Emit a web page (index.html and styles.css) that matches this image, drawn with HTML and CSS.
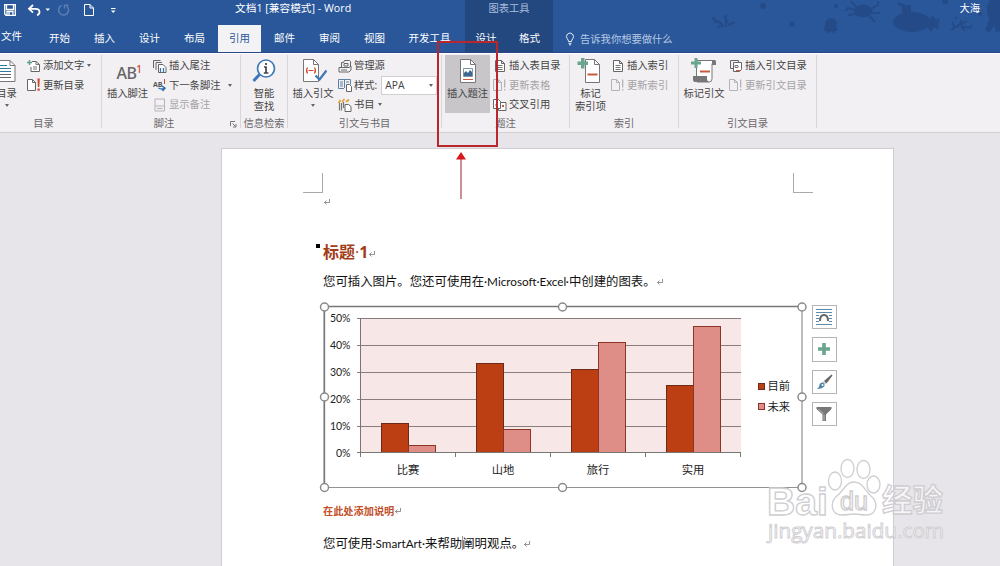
FILE: index.html
```
<!DOCTYPE html>
<html lang="zh-CN">
<head>
  <meta charset="UTF-8">
  <title>文档1 [兼容模式] - Word</title>
  <link rel="stylesheet" href="styles.css">
</head>
<body>

<!-- shared icon shapes -->
<svg class="defs" width="0" height="0">
  <symbol id="i-update" viewBox="0 0 14 14">
    <path d="M.5 1.500h5l3 3v8h-8z" fill="#fff" stroke="#666"/><path d="M5.500 1.500v3h3" fill="none" stroke="#666"/>
    <path d="M10.400 .5h2.400l-.5 8.500h-1.400zM10.500 10.500h2.200v2.200h-2.200z" fill="#d24726"/>
  </symbol>
  <symbol id="i-update-off" viewBox="0 0 14 14">
    <path d="M.5 1.500h5l3 3v8h-8zM5.500 1.500v3h3" fill="none" stroke="#b5b3b6"/>
    <path d="M11 1.500h1.300v8H11zM11 11h1.300v1.500H11z" fill="#b5b3b6"/>
  </symbol>
  <symbol id="i-lines" viewBox="0 0 14 14">
    <path d="M2.500 1.500h6l3 3v8h-9zM8.500 1.500v3h3" fill="#fff" stroke="#666"/>
    <path d="M4.500 6.500h5M4.500 8.500h5M4.500 10.500h5" stroke="#777"/>
  </symbol>
  <symbol id="i-return" viewBox="0 0 8 8">
    <path d="M6.500 1v3.500h-5M3.500 2.500l-2 2 2 2" fill="none" stroke="#777" stroke-width=".8"/>
  </symbol>
  <symbol id="i-plus" viewBox="0 0 10 10">
    <path d="M3.500 0h3v3.500H10v3H6.500V10h-3V6.500H0v-3h3.500z" fill="#6aa58f"/>
  </symbol>
</svg>

<header class="header">
  <div class="header-left">
    <div class="title-row">
      <div class="quick">
        <svg width="120" height="20" viewBox="0 0 120 20">
          <path d="M4.700 4.700h10.600v10.600H6L4.700 14zM6.500 5v4.500h7V5M7 15v-3.500h6V15M9 12v3" fill="none" stroke="#fff" stroke-width="1.300"/>
          <path d="M33 5l-4 3.800 4 3.800M29.500 8.800h6q4 0 4 3.200 0 2.500-2.500 3" fill="none" stroke="#fff" stroke-width="1.800"/>
          <path d="M45.500 8.500h4.500l-2.200 2.500z" fill="#fff"/>
          <path d="M61.500 5.500a5 5 0 1 0 5 .5M64.500 8.500V5.200h4" fill="none" stroke="#5a7db3" stroke-width="1.500"/>
          <path d="M84.500 4.500h5.500l3.500 3.500v7.500h-9zM90 4.500v3.500h3.500" fill="none" stroke="#fff"/>
          <path d="M111 8.500h4.500" stroke="#fff"/><path d="M111 10.500h4.500L113.200 13z" fill="#fff"/>
        </svg>
      </div>
      <div class="title">文档1 [兼容模式] - Word</div>
    </div>
    <nav class="tabs">
      <div class="tab file">文件</div>
      <div class="tab">开始</div>
      <div class="tab">插入</div>
      <div class="tab">设计</div>
      <div class="tab">布局</div>
      <div class="tab active">引用</div>
      <div class="tab">邮件</div>
      <div class="tab">审阅</div>
      <div class="tab">视图</div>
      <div class="tab wide">开发工具</div>
    </nav>
  </div>
  <div class="header-context">
    <div class="context-title">图表工具</div>
    <nav class="tabs">
      <div class="tab first">设计</div>
      <div class="tab">格式</div>
    </nav>
  </div>
  <div class="header-right">
    <svg class="sea" width="330" height="52" viewBox="0 0 330 52">
      <g fill="#244b87">
        <circle cx="93" cy="6" r="3"/><circle cx="122" cy="24" r="2.500"/><circle cx="166" cy="6" r="2"/><circle cx="275" cy="1" r="3"/><circle cx="310" cy="14" r="2"/>
        <circle cx="161" cy="24" r="6"/><path d="M155 26l-1 5h3l1 3 3-3 3 3 1-3h3l-2-5z"/>
        <ellipse cx="193" cy="11" rx="9" ry="6.500"/>
        <ellipse cx="242" cy="22" rx="19" ry="10"/><path d="M232 14V7l-5-3 1-2 8 3h5v9zM258 20l5-5 3 5 4-2-2 6 1 6-5-3-3 5-5-7z"/>
        <ellipse cx="328" cy="10" rx="11" ry="14"/><path d="M319 20l-4 10 4 3 5-7 2 6 5-1V16z"/>
      </g>
      <g fill="none" stroke="#244b87" stroke-width="2">
        <path d="M46 23l-3-6M43 19l8 4 3 4M56 27v-9M54 18l3-3M58 25l7-3M52 25l-5 3M58 22l-3-3"/>
        <path d="M187 11l-9-3-3 3M187 14l-9 1M201 9l7-4V1M201 13l9 0M199 16l6 6M186 7l-5-6"/>
        <path d="M281 30l8-5 3-5M285 28l-3-6M290 25l7-4M291 26l9 2 2-3M291 26l4 5M287 19l-2-2"/>
      </g>
    </svg>
    <div class="user">大海</div>
    <div class="tell">
      <svg width="10" height="14" viewBox="0 0 10 14"><path d="M3.500 9.500q0-1.500-1.200-2.700a3.500 3.500 0 1 1 5.400 0Q6.500 8 6.500 9.500zM3.500 11.300h3M4 12.800h2" fill="none" stroke="#e6edf7"/></svg>
      <span>告诉我你想要做什么</span>
    </div>
  </div>
</header>

<section class="ribbon">
  <div class="group g-toc">
    <div class="group-body">
      <div class="big">
        <svg width="28" height="28" viewBox="0 0 28 28"><path d="M1.500 3.500H17l5 5v16H1.500z" fill="#fff" stroke="#777"/><path d="M17 3.500v5h5" fill="none" stroke="#777"/><path d="M4 8.500h10M4 11.500h14M4 14.500h14" stroke="#2e7b9c"/><path d="M4 17.500h14M4 20.500h14" stroke="#666"/></svg>
        <span>目录</span><i class="arrow"></i>
      </div>
      <div class="col">
        <div class="row"><svg width="14" height="14" viewBox="0 0 14 14"><path d="M5 2.500h4l3.500 3v7H4V8" fill="#fff" stroke="#666"/><path d="M9 2.500v3h3.500M6 8h4M6 10h4" fill="none" stroke="#777"/><path d="M0 3.500h5M2.500 1v5" stroke="#5a9e84" stroke-width="1.300"/></svg><span>添加文字</span><i class="arrow"></i></div>
        <div class="row"><svg width="14" height="14"><use href="#i-update"/></svg><span>更新目录</span></div>
      </div>
    </div>
    <div class="group-name">目录</div>
  </div>

  <div class="group g-note">
    <div class="group-body">
      <div class="big">
        <div class="ab">AB<sup>1</sup></div>
        <span>插入脚注</span>
      </div>
      <div class="col">
        <div class="row"><svg width="14" height="14" viewBox="0 0 14 14"><path d="M.5 9V1.500h7M3 11V3.500h6" fill="none" stroke="#666"/><path d="M5.500 5.500h4.500l3 3v5h-7.500z" fill="#fff" stroke="#666"/><path d="M7.500 13V9M10.500 13V9" stroke="#3b78b5" stroke-width="1.300"/></svg><span>插入尾注</span></div>
        <div class="row"><svg width="14" height="14" viewBox="0 0 14 14"><text x="0" y="8.500" class="ab-mini">AB</text><path d="M11.500 1v5" stroke="#d24726"/><path d="M5.500 10q3 2 6 0M9 8l3 2.200L9.500 13" fill="none" stroke="#2f6fae" stroke-width="1.500"/></svg><span>下一条脚注</span><i class="arrow far"></i></div>
        <div class="row off"><svg width="14" height="14" viewBox="0 0 14 14"><path d="M2 1h9.500v12H2zM2 8h9.500M4 10.500h5.500" fill="none" stroke="#b5b3b6"/></svg><span>显示备注</span></div>
      </div>
    </div>
    <div class="group-name">脚注</div>
    <svg class="launcher" width="7" height="7" viewBox="0 0 7 7"><path d="M.5 5V.5H5M2.500 2.500l3 3M6 3v3H3" fill="none" stroke="#777"/></svg>
  </div>

  <div class="group g-find">
    <div class="group-body">
      <div class="big">
        <svg width="28" height="28" viewBox="0 0 28 28"><path d="M9.500 17.500L3.500 24" stroke="#3f78b5" stroke-width="3"/><circle cx="16" cy="11.500" r="8.500" fill="#fff" stroke="#3f78b5" stroke-width="1.700"/><path d="M16 6v2M14 10h2v6M13.800 16h4.600" stroke="#444" stroke-width="1.700" fill="none"/></svg>
        <span>智能<br>查找</span>
      </div>
    </div>
    <div class="group-name">信息检索</div>
  </div>

  <div class="group g-cite">
    <div class="group-body">
      <div class="big">
        <svg width="28" height="28" viewBox="0 0 28 28"><path d="M4.500 2.500h10l5 5v17h-15z" fill="#fff" stroke="#777"/><path d="M14.500 2.500v5h5" fill="none" stroke="#777"/><path d="M8.500 10.500q-2 3 0 6M15.500 10.500q2 3 0 6M9.500 13.500h5" fill="none" stroke="#d2472a" stroke-width="1.200"/><path d="M16.500 18.500l4 4 7-9" fill="none" stroke="#3f78b5" stroke-width="2.200"/></svg>
        <span>插入引文</span><i class="arrow"></i>
      </div>
      <div class="col">
        <div class="row"><svg width="14" height="14" viewBox="0 0 14 14"><path d="M3.500 8V3.500h2l1-2h5l1 1v5.500M1 8.500h10l2-1.500v4l-2 2H1z" fill="#f4f2f5" stroke="#666"/><path d="M3 11h6M6 4.500h4v2.500H6z" fill="none" stroke="#666"/></svg><span>管理源</span></div>
        <div class="row"><svg width="14" height="14" viewBox="0 0 14 14"><path d="M.5 1.500h12v5M.5 1.500v9H6M6.500 2v8M2 4h3M2 6h3M2 8h3M8 4h3" fill="none" stroke="#5b82a5"/><path d="M8.500 6.500h3l2 2v5h-5z" fill="#fff" stroke="#666"/></svg><span>样式:</span><div class="combo">APA<i class="arrow"></i></div></div>
        <div class="row"><svg width="14" height="14" viewBox="0 0 14 14"><path d="M1.500 4v8.500M3.500 5v7.500M5.500 4v6" stroke="#777" stroke-width="1.200"/><path d="M.5 5l2-3M4 4l2.500-3M8 4l3-2.500" stroke="#e4a23c" stroke-width="1.800"/><path d="M7 6.500h3.500l2.500 2v5H7z" fill="#fff" stroke="#666"/></svg><span>书目</span><i class="arrow"></i></div>
      </div>
    </div>
    <div class="group-name">引文与书目</div>
  </div>

  <div class="group g-caption">
    <div class="group-body">
      <div class="big selected">
        <svg width="28" height="28" viewBox="0 0 28 28"><path d="M6.500 2.500h10l5 5v18h-15z" fill="#fff" stroke="#777"/><path d="M16.500 2.500v5h5" fill="none" stroke="#777"/><path d="M9.500 11.500h9v8h-9z" fill="#fff" stroke="#7d96ac"/><path d="M10 19v-3l2-2 2 2 2-3 2 2v4z" fill="#3d678f"/><path d="M9 22.500h10" stroke="#c9593f"/></svg>
        <span>插入题注</span>
      </div>
      <div class="col">
        <div class="row"><svg width="14" height="14"><use href="#i-lines"/></svg><span>插入表目录</span></div>
        <div class="row off"><svg width="14" height="14"><use href="#i-update-off"/></svg><span>更新表格</span></div>
        <div class="row"><svg width="14" height="14" viewBox="0 0 14 14"><path d="M.5 1.500h5l2 2v7h-7zM7.500 4.500H13v8H5.500v-2" fill="#fff" stroke="#666"/><path d="M2.500 6h2v2h-2zM9 7h2v2H9z" fill="#c9593f"/></svg><span>交叉引用</span></div>
      </div>
    </div>
    <div class="group-name">题注</div>
  </div>

  <div class="group g-index">
    <div class="group-body">
      <div class="big">
        <svg width="28" height="28" viewBox="0 0 28 28"><path d="M8.500 2.500h9l5 5v18h-14z" fill="#fff" stroke="#777"/><path d="M17.500 2.500v5h5" fill="none" stroke="#777"/><path d="M4 1h3.500v3.500H11V8H7.500v3.500H4V8H.5V4.500H4z" fill="#6aa58f"/><path d="M13 17.500h10" transform="translate(-2.500)" stroke="#c9593f" stroke-width="2"/></svg>
        <span>标记<br>索引项</span>
      </div>
      <div class="col">
        <div class="row"><svg width="14" height="14"><use href="#i-lines"/></svg><span>插入索引</span></div>
        <div class="row off"><svg width="14" height="14"><use href="#i-update-off"/></svg><span>更新索引</span></div>
      </div>
    </div>
    <div class="group-name">索引</div>
  </div>

  <div class="group g-auth">
    <div class="group-body">
      <div class="big">
        <svg width="28" height="28" viewBox="0 0 28 28"><path d="M6.500 19V3.500H25v3h-3V22q0 3-3 3H7" fill="#fff" stroke="#777"/><path d="M22 3h2q2 0 2 2v3h-4zM3 19h14v3q0 2 2 3H5q-2 0-2-2z" fill="#777"/><path d="M4.500 1h3v3.500H11v3H7.500V11h-3V7.500H1v-3h3.500z" fill="#6aa58f"/><path d="M10 14.500h10" stroke="#c9593f" stroke-width="2"/></svg>
        <span>标记引文</span>
      </div>
      <div class="col">
        <div class="row"><svg width="14" height="14" viewBox="0 0 14 14"><path d="M4 9.500H1.500v-8h8V3" fill="none" stroke="#666"/><path d="M4.500 3.500h8v7l-2 2h-6z" fill="#fff" stroke="#666"/><path d="M6 6.500h3v2H6z" fill="none" stroke="#777"/><path d="M7 11.500h4" stroke="#c9593f"/></svg><span>插入引文目录</span></div>
        <div class="row off"><svg width="14" height="14"><use href="#i-update-off"/></svg><span>更新引文目录</span></div>
      </div>
    </div>
    <div class="group-name">引文目录</div>
  </div>
</section>

<main class="workspace">
  <article class="page">
    <div class="corners"><i class="corner left"></i><i class="corner right"></i></div>
    <p class="empty"><svg class="ret" width="8" height="8"><use href="#i-return"/></svg></p>
    <h1 class="heading"><i class="bullet"></i>标题<b class="dot">·</b>1<svg class="ret" width="8" height="8"><use href="#i-return"/></svg></h1>
    <p class="text">您可插入图片。您还可使用在<span class="en">·Microsoft·Excel·</span>中创建的图表。<svg class="ret" width="8" height="8"><use href="#i-return"/></svg></p>

    <div class="figure">
      <!-- origin of the viewBox is kept in page pixels -->
      <svg class="chart" width="490" height="194" viewBox="318 300 490 194">
        <rect x="361" y="318" width="380" height="135" fill="#f8e7e7"/>
        <path d="M357 318.500h384M357 345.500h384M357 372.500h384M357 399.500h384M357 426.500h384" stroke="#8b7d7d"/>
        <g stroke="#6d2a1a" stroke-width="1">
          <g fill="#bc3f14">
            <rect x="381.500" y="423.500" width="27" height="29"/>
            <rect x="476.500" y="363.500" width="27" height="89"/>
            <rect x="571.500" y="369.500" width="27" height="83"/>
            <rect x="666.500" y="385.500" width="27" height="67"/>
            <rect x="758.500" y="383.500" width="6" height="6"/>
          </g>
          <g fill="#df8e87" stroke="#8c3527">
            <rect x="408.500" y="445.500" width="27" height="7"/>
            <rect x="503.500" y="429.500" width="27" height="23"/>
            <rect x="598.500" y="342.500" width="27" height="110"/>
            <rect x="693.500" y="326.500" width="27" height="126"/>
            <rect x="758.500" y="403.500" width="6" height="6"/>
          </g>
        </g>
        <path d="M357 452.500h384M360.500 318v139M455.500 453v4M550.500 453v4M645.500 453v4M740.500 453v4" fill="none" stroke="#777"/>
        <g class="axis">
          <text x="350.500" y="322">50%</text><text x="350.500" y="349">40%</text><text x="350.500" y="376">30%</text>
          <text x="350.500" y="403">20%</text><text x="350.500" y="430">10%</text><text x="350.500" y="457">0%</text>
        </g>
        <g class="cats">
          <text x="408" y="474">比赛</text><text x="503" y="474">山地</text><text x="598" y="474">旅行</text><text x="693" y="474">实用</text>
        </g>
        <g class="legend"><text x="767.500" y="390">目前</text><text x="767.500" y="411">未来</text></g>
        <path d="M324 306.500h478" stroke="#777" stroke-width="1.700"/><path d="M324.300 306v182" stroke="#777" stroke-width="1.700"/>
        <path d="M802 306v182M324 487.500h478" stroke="#929292" stroke-width="1.200"/>
        <g fill="#fff" stroke="#8a8a8a" stroke-width="1.500">
          <circle cx="324.500" cy="307" r="4"/><circle cx="562.500" cy="307" r="4"/><circle cx="802" cy="307" r="4"/>
          <circle cx="324.500" cy="397" r="4"/><circle cx="802" cy="397" r="4"/>
          <circle cx="324.500" cy="487.500" r="4"/><circle cx="562.500" cy="487.500" r="4"/><circle cx="802" cy="487.500" r="4"/>
        </g>
      </svg>
      <div class="tools">
        <div class="tool"><svg width="18" height="18" viewBox="0 0 18 18"><path d="M1 1.500h16M1 4.500h16M1 16.500h16" stroke="#5d8bab"/><path d="M1 7.500h3M1 10.500h3M1 13.500h3M14 7.500h3M14 10.500h3M14 13.500h3" stroke="#5d8bab"/><path d="M5 13q0-6 4-6t4 6" fill="none" stroke="#666" stroke-width="2"/></svg></div>
        <div class="tool"><svg width="12" height="12"><use href="#i-plus"/></svg></div>
        <div class="tool"><svg width="18" height="18" viewBox="0 0 18 18"><path d="M16.500 1.500l1 1-6 8-2.500-2.500z" fill="#666"/><path d="M8 8.500l2.500 2.500" stroke="#999"/><path d="M7.500 9.500q2.500 1 2 3.500-2 3-8 3 3-1.500 3-4.500 1-2 3-2z" fill="#4882aa"/><circle cx="7.500" cy="12" r="1" fill="#fff"/></svg></div>
        <div class="tool"><svg width="18" height="18" viewBox="0 0 18 18"><path d="M1.500 2h15v2L11 9.500V16H7.500V9.500L1.500 4z" fill="#777"/><path d="M9 10v5.500M3.500 4l5 5" stroke="#bbb"/></svg></div>
      </div>
    </div>

    <p class="caption">在此处添加说明<svg class="ret" width="8" height="8"><use href="#i-return"/></svg></p>
    <p class="text last">您可使用<span class="en">·SmartArt·</span>来帮助<span class="caret"></span>阐明观点。<svg class="ret" width="8" height="8"><use href="#i-return"/></svg></p>
  </article>
</main>

<!-- red callout over the caption button -->
<div class="callout"></div>
<svg class="callout-arrow" width="12" height="50" viewBox="0 0 12 50"><path d="M6 6v42" stroke="#a8484c" stroke-width="1.200"/><path d="M6 1l5 7.500H1z" fill="#d8161c"/></svg>

<svg class="watermark" width="190" height="92" viewBox="760 456 190 92">
  <g class="wm">
    <text class="wm-logo" x="767" y="514.500" textLength="61" lengthAdjust="spacingAndGlyphs">Bai</text>
    <ellipse cx="835" cy="481" rx="6.500" ry="9"/><ellipse cx="847.500" cy="468.500" rx="6.500" ry="9"/><ellipse cx="863.500" cy="469.500" rx="6.500" ry="9"/><ellipse cx="873.500" cy="484.500" rx="6.500" ry="8.500"/>
    <path d="M854 482c-8 0-10 8-16 13-9 7-7 20 4 20 5 0 7-1 12-1s7 1 12 1c11 0 13-12 5-19-6-6-9-14-17-14z"/>
    <text class="wm-du" x="840" y="510" textLength="28" lengthAdjust="spacingAndGlyphs">du</text>
    <text class="wm-cn" x="882" y="511" textLength="61" lengthAdjust="spacingAndGlyphs">经验</text>
    <text class="wm-url" x="768" y="538" textLength="176" lengthAdjust="spacingAndGlyphs">jingyan.baidu.com</text>
  </g>
</svg>

</body>
</html>
```
FILE: styles.css
```
*{
  box-sizing: border-box;
}
body{
  margin: 0;
  width: 1000px;
  height: 566px;
  overflow: hidden;
  position: relative;
  background-color: #e7e5e9;
  font-family: "Open Sans", "Noto Sans CJK SC", sans-serif;
  font-size: 10.3px;
  color: #444;
}
svg{
  flex: none;
}
.defs{
  position: absolute;
}
.arrow{
  flex: none;
  width: 0;
  height: 0;
  border: 2.5px solid transparent;
  border-top: 3px solid #666;
  border-bottom: none;
}

/* title bar and tabs */
.header{
  display: flex;
  height: 53px;
  background-color: #2a579a;
  border-bottom: 1px solid #29488a;
  color: #fff;
}
.header-left{
  width: 465px;
}
.title-row{
  display: flex;
  height: 25px;
}
.quick{
  width: 235px;
  height: 20px;
}
.title{
  line-height: 17px;
  font-size: 10.7px;
  white-space: nowrap;
}
.tabs{
  display: flex;
  height: 27px;
}
.tab{
  width: 45px;
  line-height: 26px;
  text-align: center;
  font-size: 10.5px;
}
.tab.file{
  width: 37px;
  padding-left: 1px;
  line-height: 23px;
  text-align: left;
}
.tab.active{
  width: 43px;
  margin: 0 1px;
  background-color: #f3f2f5;
  color: #2b579a;
}
.tab.wide{
  width: 65px;
}
.tab.first{
  width: 42px;
}
.header-context{
  width: 88px;
  background-color: #23477f;
}
.context-title{
  height: 25px;
  line-height: 17px;
  text-align: center;
  color: #a9bedd;
}
.header-right{
  flex: 1;
  position: relative;
}
.sea{
  position: absolute;
  right: 0;
  top: 0;
}
.user{
  position: relative;
  height: 25px;
  padding-right: 20px;
  line-height: 17px;
  text-align: right;
}
.tell{
  display: flex;
  align-items: center;
  gap: 5px;
  height: 27px;
  padding-left: 12px;
  color: #b8cae5;
}

/* ribbon */
.ribbon{
  display: flex;
  height: 80px;
  background-color: #f2f0f3;
  border-top: 1px solid #fff;
  border-bottom: 1px solid #d2d0d3;
  overflow: hidden;
}
.group{
  position: relative;
  flex: none;
  height: 73px;
  margin-top: 1px;
  padding-top: 1px;
  border-right: 1px solid #d8d6d9;
}
.group-body{
  display: flex;
  height: 59px;
}
.group-name{
  line-height: 16px;
  height: 16px;
  text-align: center;
  color: #6a686b;
  white-space: nowrap;
}
.big{
  display: flex;
  flex-direction: column;
  align-items: center;
  flex: none;
  height: 58px;
  padding-top: 1px;
  line-height: 13px;
  text-align: center;
  white-space: nowrap;
}
.big span{
  margin-top: 2px;
}
.big .arrow{
  margin-top: 4px;
}
.big.selected{
  padding-top: 2px;
  background-color: #c8c6c9;
}
.row{
  display: flex;
  align-items: center;
  gap: 2px;
  height: 19.5px;
  line-height: 19px;
  white-space: nowrap;
}
.row .arrow{
  margin-left: 1px;
}
.row .far{
  margin-left: 6px;
}
.row.off{
  color: #a5a3a6;
}
.g-toc{
  width: 116px;
  margin-left: -14px;
}
.g-toc .big{
  width: 41px;
}
.g-note{
  width: 139px;
}
.g-note .big{
  width: 51px;
}
.g-note .group-name{
  padding-right: 14px;
}
.launcher{
  position: absolute;
  right: 3px;
  bottom: 0;
}
.ab{
  height: 28px;
  padding-left: 3px;
  line-height: 33px;
  font-family: "Noto Sans", sans-serif;
  font-size: 16px;
  font-weight: 500;
  letter-spacing: -.5px;
  color: #666;
}
.ab sup{
  font-size: 10px;
  line-height: 0;
  color: #d24726;
}
.ab-mini{
  font-size: 7px;
  font-weight: bold;
  fill: #555;
}
.g-find{
  width: 47px;
}
.g-find .big{
  width: 46px;
}
.g-cite{
  width: 154px;
}
.g-cite .big{
  width: 50px;
}
.combo{
  display: flex;
  align-items: center;
  justify-content: space-between;
  width: 56px;
  height: 19px;
  margin-left: 2px;
  padding: 0 3px;
  background-color: #fff;
  border: 1px solid #d0ced1;
}
.g-caption{
  width: 128px;
}
.g-caption .big{
  width: 45px;
  margin: -1px 3px 0;
}
.g-index{
  width: 109px;
}
.g-index .big{
  width: 41px;
}
.g-auth{
  width: 138px;
}
.g-auth .big{
  width: 50px;
}

/* document */
.workspace{
  padding: 15px 0 0 221px;
}
.page{
  width: 673px;
  height: 430px;
  padding: 24px 0 0 101px;
  background-color: #fff;
  border: 1px solid #cfcdd1;
  color: #111;
}
.page p, .page h1{
  margin: 0;
  white-space: nowrap;
}
.corners{
  display: flex;
  justify-content: space-between;
  width: 510px;
  height: 20px;
  margin-left: -20px;
}
.corner{
  width: 20px;
  height: 20px;
  border-bottom: 1px solid #aaa;
}
.corner.left{
  border-right: 1px solid #aaa;
}
.corner.right{
  border-left: 1px solid #aaa;
}
.empty{
  height: 18px;
  line-height: 18px;
}
.page .heading{
  position: relative;
  height: 28px;
  margin-top: 27px;
  line-height: 28px;
  font-size: 16px;
  font-weight: bold;
  color: #a23d17;
}
.bullet{
  position: absolute;
  left: -7px;
  top: 6px;
  width: 4px;
  height: 4px;
  background-color: #000;
}
.dot{
  font-weight: normal;
}
.page .text{
  height: 20px;
  margin-top: 5px;
  line-height: 20px;
  font-size: 12.4px;
}
.en{
  font-family: Lato, sans-serif;
  font-size: 11.7px;
}
.figure{
  display: flex;
  height: 194px;
  margin: 9px 0 0 -5px;
}
.chart text{
  fill: #222;
}
.axis{
  font-family: Lato, sans-serif;
  font-size: 10.5px;
  text-anchor: end;
}
.cats{
  font-size: 11.3px;
  text-anchor: middle;
}
.legend{
  font-size: 11.3px;
}
.tools{
  display: flex;
  flex-direction: column;
  gap: 8px;
  padding: 5px 0 0 4px;
}
.tool{
  display: flex;
  align-items: center;
  justify-content: center;
  width: 24.5px;
  height: 24.3px;
  border: 1px solid #b5b3b6;
  background-color: #fff;
}
.page .caption{
  height: 16px;
  margin-top: 9px;
  line-height: 16px;
  font-size: 10.2px;
  font-weight: bold;
  color: #c2502a;
}
.page .text.last{
  margin-top: 14px;
}
.text.last .ret{
  margin-left: -1px;
}
.caret{
  display: inline-block;
  width: 1px;
  height: 14px;
  margin-right: -1px;
  background-color: #999;
  vertical-align: -2px;
}

/* things lying over the window */
.callout{
  position: absolute;
  left: 437px;
  top: 41px;
  width: 61px;
  height: 106px;
  border: 2px solid #b9262c;
}
.callout-arrow{
  position: absolute;
  left: 455px;
  top: 151px;
}
.watermark{
  position: absolute;
  left: 760px;
  top: 456px;
}
.wm{
  fill: #fff;
  fill-opacity: .65;
  stroke: #cfcdd1;
  stroke-width: 1.3;
}
.wm-logo{
  font-family: "Liberation Sans", sans-serif;
  font-size: 38px;
  font-weight: bold;
}
.wm-du{
  font-family: "Liberation Sans", sans-serif;
  font-size: 25px;
}
.wm-cn{
  font-family: "Noto Sans CJK SC", sans-serif;
  font-size: 31px;
  font-weight: bold;
}
.wm-url{
  font-family: "Open Sans", sans-serif;
  font-size: 20px;
  stroke-width: .9;
}
```
